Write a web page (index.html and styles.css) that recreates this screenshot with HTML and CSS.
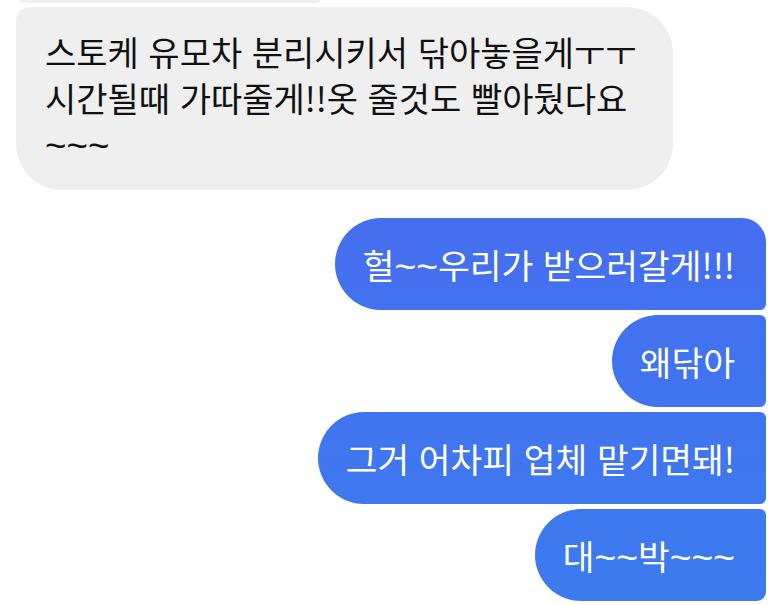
FILE: index.html
```html
<!DOCTYPE html>
<html lang="ko">
<head>
  <meta charset="UTF-8" />
  <meta name="viewport" content="width=device-width, initial-scale=1.0"/>
  <title>대화</title>
  <link rel="stylesheet" href="styles.css">
</head>
<body>
  <div class="chat">
    <div class="prev-tail"></div>

    <div class="bubble them">스토케 유모차 분리시키서 닦아놓을게ㅜㅜ<br>시간될때 가따줄게!!옷 줄것도 빨아뒀다요<br><span class="tilde">~~~</span></div>

    <div class="mine-group">
      <div class="bubble me first">헐<span class="tilde">~~</span>우리가 받으러갈게!!!</div>
      <div class="bubble me">왜닦아</div>
      <div class="bubble me">그거 어차피 업체 맡기면돼!</div>
      <div class="bubble me last">대<span class="tilde">~~</span>박<span class="tilde">~~~</span></div>
    </div>
  </div>
</body>
</html>
```

FILE: styles.css
```css
body {
  margin: 0;
  background: #fff;
  font-family: "Noto Sans CJK KR", "Noto Sans", sans-serif;
  overflow: hidden;
}
.chat {
  display: flex;
  flex-direction: column;
  width: 773px;
  height: 605px;
}
.prev-tail {
  flex: none;
  width: 300px;
  height: 3px;
  margin-left: 20px;
  background: #efefef;
  border-radius: 0 0 4px 4px;
}
.bubble {
  flex: none;
  font-size: 34px;
  line-height: 46px;
  white-space: nowrap;
}
.tilde {
  font-family: "Liberation Sans", sans-serif;
  font-size: 1.08em;
  line-height: 0;
}
.them {
  align-self: flex-start;
  margin: 4px 0 0 16px;
  width: 657px;
  height: 183px;
  box-sizing: border-box;
  padding: 22px 20px 0 29px;
  background: #efefef;
  color: #111;
  border-radius: 14px 46px 46px 46px;
}
.mine-group {
  display: flex;
  flex-direction: column;
  align-items: flex-end;
  gap: 5px;
  margin: 28px 7px 0 0;
}
.me {
  font-size: 34.5px;
  height: 92px;
  box-sizing: border-box;
  padding: 23px 31px 0 28px;
  color: #fff;
  background: linear-gradient(180deg, #4a69f0 0%, #4470ef 45%, #3c7bee 100%) fixed;
  border-radius: 46px 6px 6px 46px;
}
.me.first {
  border-top-right-radius: 24px;
}
.me.last {
  border-bottom-right-radius: 9px;
}
```
